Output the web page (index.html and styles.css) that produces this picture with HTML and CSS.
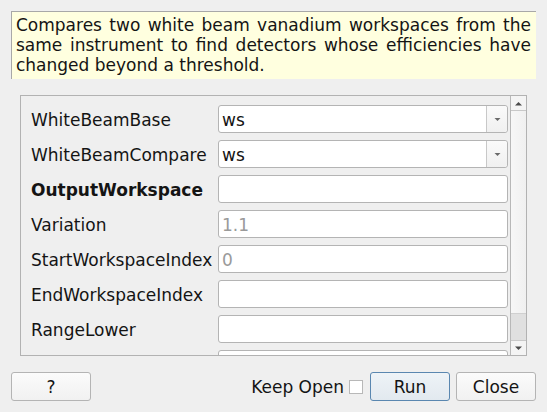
FILE: index.html
```html
<!DOCTYPE html>
<html>
<head>
<meta charset="utf-8">
<link rel="stylesheet" href="styles.css">
</head>
<body>
<div class="dialog">
  <div class="desc">Compares two white beam vanadium workspaces from the same instrument to find detectors whose efficiencies have changed beyond a threshold.</div>
  <div class="frame">
    <div class="viewport">
      <div class="rows">
        <div class="label">WhiteBeamBase</div>
        <div class="combo"><span class="val">ws</span><span class="drop"><svg width="9" height="5" viewBox="0 0 9 5"><path d="M1.5 1h6L4.5 4z" fill="#6a6a6a"/></svg></span></div>
        <div class="label">WhiteBeamCompare</div>
        <div class="combo"><span class="val">ws</span><span class="drop"><svg width="9" height="5" viewBox="0 0 9 5"><path d="M1.5 1h6L4.5 4z" fill="#6a6a6a"/></svg></span></div>
        <div class="label bold">OutputWorkspace</div>
        <div class="input"></div>
        <div class="label">Variation</div>
        <div class="input ph">1.1</div>
        <div class="label">StartWorkspaceIndex</div>
        <div class="input ph">0</div>
        <div class="label">EndWorkspaceIndex</div>
        <div class="input"></div>
        <div class="label">RangeLower</div>
        <div class="input"></div>
        <div class="label">RangeUpper</div>
        <div class="input"></div>
      </div>
    </div>
    <div class="scrollbar">
      <div class="sb-btn"><svg width="9" height="5" viewBox="0 0 9 5"><path d="M1 4.5h7L4.5 1z" fill="#4a4a4a"/></svg></div>
      <div class="sb-track"><div class="sb-handle"></div></div>
      <div class="sb-btn down"><svg width="9" height="5" viewBox="0 0 9 5"><path d="M1 0.5h7L4.5 4z" fill="#4a4a4a"/></svg></div>
    </div>
  </div>
  <div class="footer">
    <button class="btn">?</button>
    <div class="spacer"></div>
    <span class="keep">Keep Open</span>
    <span class="check"></span>
    <button class="btn run">Run</button>
    <button class="btn">Close</button>
  </div>
</div>
</body>
</html>
```
FILE: styles.css
```css
html, body {
  margin: 0;
  padding: 0;
  background: #efefef;
}
body {
  width: 547px;
  height: 412px;
  overflow: hidden;
  font-family: "DejaVu Sans", sans-serif;
  font-size: 17px;
  color: #141414;
}
.dialog {
  padding: 11px 11px 0 11px;
  display: flex;
  flex-direction: column;
}
.desc {
  background: #ffffdf;
  border-top: 1px solid #a8a8a8;
  border-left: 1px solid #a8a8a8;
  padding: 3px 5px 0 4px;
  line-height: 20px;
  text-align: justify;
  box-sizing: border-box;
  height: 68px;
}
.frame {
  margin: 16px 9px 0 9px;
  height: 261px;
  border: 1px solid #b2b2b2;
  display: flex;
  box-sizing: border-box;
}
.viewport {
  flex: 1;
  overflow: hidden;
}
.rows {
  display: grid;
  grid-template-columns: 187px 290px;
  grid-auto-rows: 28px;
  row-gap: 7px;
  padding: 9px 0 0 10px;
}
.label {
  display: flex;
  align-items: center;
  white-space: nowrap;
  padding-top: 1px;
}
.bold { font-weight: bold; }
.combo, .input {
  background: #fff;
  border: 1px solid #b4b4b4;
  border-radius: 3px;
  box-sizing: border-box;
  display: flex;
  align-items: center;
  padding-top: 1px;
}
.combo .val, .input {
  padding-left: 3px;
}
.combo .val { flex: 1; }
.combo { padding-top: 0; }
.combo .val { padding-top: 1px; }
.drop {
  width: 20px;
  height: 100%;
  border-left: 1px solid #c8c8c8;
  display: flex;
  align-items: center;
  justify-content: center;
  background: linear-gradient(#fafafa, #f0f0f0);
  border-radius: 0 3px 3px 0;
}
.ph { color: #9a9a9a; }
.scrollbar {
  width: 15px;
  border-left: 1px solid #b8b8b8;
  display: flex;
  flex-direction: column;
}
.sb-btn {
  height: 15px;
  display: flex;
  align-items: center;
  justify-content: center;
  border-bottom: 1px solid #c8c8c8;
  background: #f4f4f4;
  box-sizing: border-box;
}
.sb-btn.down {
  border-bottom: none;
  border-top: 1px solid #c8c8c8;
}
.sb-track {
  flex: 1;
  background: linear-gradient(90deg, #f7f7f7, #f0f0f0);
  display: flex;
  flex-direction: column;
  justify-content: flex-end;
}
.sb-handle {
  height: 26px;
  background: #e0e0e0;
  border-top: 1px solid #d0d0d0;
}
.footer {
  display: flex;
  align-items: center;
  margin-top: 16px;
  height: 29px;
}
.spacer { flex: 1; }
.btn {
  font-family: "DejaVu Sans", sans-serif;
  font-size: 17px;
  color: #141414;
  width: 80px;
  height: 29px;
  border: 1px solid #b4b4b4;
  border-radius: 3px;
  background: linear-gradient(#fbfbfb, #f1f1f1);
  padding: 0;
  margin: 0;
}
.btn.run {
  border-color: #5a87b0;
  background: linear-gradient(#eef3f7, #e2e9ef);
  margin-right: 6px;
}
.keep {
  margin-right: 5px;
}
.check {
  width: 12px;
  height: 12px;
  background: #fff;
  border: 1px solid #b8b8b8;
  margin-right: 7px;
}
```
